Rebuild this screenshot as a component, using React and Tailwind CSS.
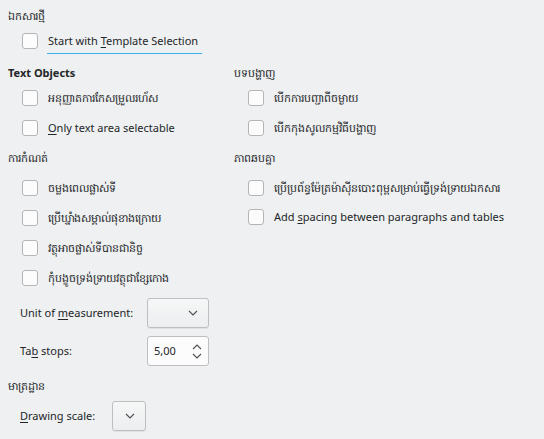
import React from 'react';

const font = { fontFamily: '"Noto Sans", "DejaVu Sans", sans-serif' };

function Box() {
  return <span className="w-4 h-4 shrink-0 rounded-[3px] border border-[#b3b5b7] bg-[#fcfcfc]" />;
}

function Check({ children, h = 'h-[30px]' }) {
  return (
    <div className={`flex items-center pl-[14px] ${h}`}>
      <Box />
      <span className="ml-[10px] whitespace-nowrap">{children}</span>
    </div>
  );
}

function Heading({ children, h = 'h-[20px]', bold, className = '' }) {
  return <div className={`flex items-center whitespace-nowrap ${h} ${bold ? 'font-bold' : ''} ${className}`}>{children}</div>;
}

function Chevron({ up }) {
  return (
    <svg width="10" height="6" viewBox="0 0 10 6" className="shrink-0">
      <path d={up ? 'M1 5 L5 1 L9 5' : 'M1 1 L5 5 L9 1'} fill="none" stroke="#4d4f52" strokeWidth="1.1" />
    </svg>
  );
}

function Combo({ w }) {
  return (
    <div className={`${w} h-[30px] rounded-[3px] border border-[#bcbec1] bg-gradient-to-b from-[#f6f7f7] to-[#eceeef] flex items-center justify-end pr-[10px] shadow-[0_1px_0_rgba(0,0,0,0.06)]`}>
      <Chevron />
    </div>
  );
}

export default function App() {
  return (
    <div className="w-[544px] h-[439px] bg-[#eff0f1] text-[#232629] text-[11px] overflow-hidden" style={font}>
      <div className="pl-2 pt-[4px]">
        <Heading h="h-[24px]">ឯកសារថ្មី</Heading>
        <div className="flex items-center pl-[14px] h-[26px]">
          <Box />
          <span className="ml-[9px] relative whitespace-nowrap pl-px pr-[4px]">
            Start with <u className="underline-offset-2">T</u>emplate Selection
            <span className="absolute left-0 right-0 -bottom-[5px] h-px bg-[#3daee9]" />
          </span>
        </div>

        <div className="flex mt-[9px]">
          <div className="w-[226px] shrink-0">
            <Heading bold>Text Objects</Heading>
            <Check>អនុញ្ញាតការកែសម្រួលរហ័ស</Check>
            <Check><u className="underline-offset-2">O</u>nly text area selectable</Check>
            <Heading h="h-[30px]">ការកំណត់</Heading>
            <Check>ចម្លងពេលផ្លាស់ទី</Check>
            <Check>ប្រើឃ្នាំងសម្គាល់ផុខាងក្រោយ</Check>
            <Check>វត្ថុអាចផ្លាស់ទីបានជានិច្ច</Check>
            <Check>កុំបង្ខូចទ្រង់ទ្រាយវត្ថុជាខ្សែកោង</Check>

            <div className="flex items-center pl-3 mt-[5px]">
              <span className="w-[127px] whitespace-nowrap">Unit of <u className="underline-offset-2">m</u>easurement:</span>
              <Combo w="w-[62px]" />
            </div>
            <div className="flex items-center pl-3 mt-[8px]">
              <span className="w-[127px] whitespace-nowrap">Ta<u className="underline-offset-2">b</u> stops:</span>
              <div className="w-[62px] h-[30px] rounded-[3px] border border-[#bcbec1] bg-[#fcfcfc] flex items-center justify-between pl-[6px] pr-[6px]">
                <span>5,00</span>
                <span className="flex flex-col gap-[3px]">
                  <Chevron up />
                  <Chevron />
                </span>
              </div>
            </div>
            <Heading h="h-[20px]" className="mt-[10px]">មាត្រដ្ឋាន</Heading>
            <div className="flex items-center pl-3 mt-[5px]">
              <span className="w-[92px] whitespace-nowrap"><u className="underline-offset-2">D</u>rawing scale:</span>
              <Combo w="w-[34px]" />
            </div>
          </div>

          <div>
            <Heading>បទបង្ហាញ</Heading>
            <Check>បើកការបញ្ជាពីចម្ងាយ</Check>
            <Check>បើកកុងសូលកម្មវិធីបង្ហាញ</Check>
            <Heading h="h-[30px]">ភាពឆបគ្នា</Heading>
            <Check>ប្រើប្រព័ន្ធម៉ែត្រម៉ាស៊ីនបោះពុម្ពសម្រាប់ធ្វើទ្រង់ទ្រាយឯកសារ</Check>
            <Check h="h-[28px]">Add <u className="underline-offset-2">s</u>pacing between paragraphs and tables</Check>
          </div>
        </div>
      </div>
    </div>
  );
}
